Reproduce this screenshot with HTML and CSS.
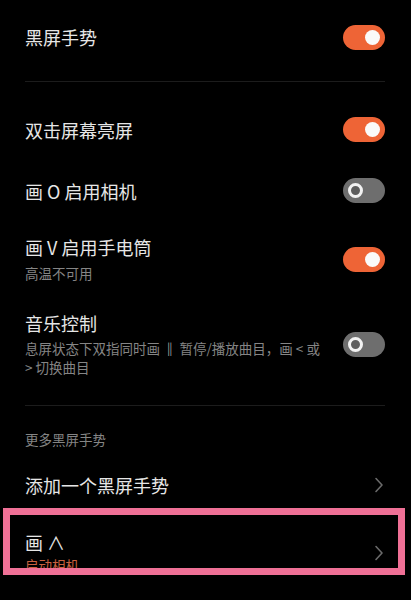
FILE: index.html
```html
<!DOCTYPE html>
<html lang="zh-CN">
<head>
<meta charset="utf-8">
<link rel="stylesheet" href="styles.css">
</head>
<body>
<div class="page">
  <div class="row first">
    <div class="text"><div class="title">黑屏手势</div></div>
    <div class="toggle on"><span class="knob"></span></div>
  </div>
  <div class="divider d1"></div>

  <div class="row single">
    <div class="text"><div class="title">双击屏幕亮屏</div></div>
    <div class="toggle on"><span class="knob"></span></div>
  </div>
  <div class="row single">
    <div class="text"><div class="title">画 O 启用相机</div></div>
    <div class="toggle off"><span class="knob"></span></div>
  </div>
  <div class="row double">
    <div class="text">
      <div class="title">画 V 启用手电筒</div>
      <div class="sub">高温不可用</div>
    </div>
    <div class="toggle on"><span class="knob"></span></div>
  </div>
  <div class="row double">
    <div class="text">
      <div class="title">音乐控制</div>
      <div class="sub multi">息屏状态下双指同时画 <span class="bar">‖</span> 暂停/播放曲目，画 &lt; 或 &gt; 切换曲目</div>
    </div>
    <div class="toggle off"><span class="knob"></span></div>
  </div>
  <div class="divider d2"></div>

  <div class="section">更多黑屏手势</div>

  <div class="row link">
    <div class="text"><div class="title">添加一个黑屏手势</div></div>
    <svg class="chev" width="10" height="16" viewBox="0 0 10 16"><path d="M2 1.5 L8 8 L2 14.5" fill="none" stroke="#6a6a6a" stroke-width="1.6" stroke-linecap="round" stroke-linejoin="round"/></svg>
  </div>
  <div class="row link gesture">
    <div class="text">
      <div class="title">画 ∧</div>
      <div class="sub accent">启动相机</div>
    </div>
    <svg class="chev" width="10" height="16" viewBox="0 0 10 16"><path d="M2 1.5 L8 8 L2 14.5" fill="none" stroke="#6a6a6a" stroke-width="1.6" stroke-linecap="round" stroke-linejoin="round"/></svg>
  </div>
  <div class="highlight"></div>
</div>
</body>
</html>
```

FILE: styles.css
```css
html, body {
  margin: 0;
  padding: 0;
  background: #000;
}
body {
  font-family: "Noto Sans CJK SC", "Noto Sans", sans-serif;
  color: #e6e6e6;
  width: 411px;
  height: 600px;
  overflow: hidden;
}
.page {
  position: relative;
  padding: 0 26px 0 25px;
}
.row {
  display: flex;
  align-items: center;
  justify-content: space-between;
}
.text {
  flex: 1;
  min-width: 0;
}
.title {
  font-size: 18px;
  line-height: 24px;
  color: #e6e6e6;
}
.sub {
  font-size: 13.5px;
  line-height: 20px;
  margin-top: 4px;
  color: #858585;
}
.sub.multi {
  line-height: 19px;
  max-width: 300px;
}
.bar {
  color: #c8c8c8;
  font-weight: bold;
}
.sub.accent {
  color: #c8603f;
  margin-top: 1px;
}
.first {
  height: 74px;
}
.single {
  padding: 18px 0;
}
.double {
  padding: 14px 0;
}
.divider {
  height: 1px;
  background: #1c1c1c;
}
.d1 {
  margin-top: 7px;
  margin-bottom: 17px;
}
.d2 {
  margin-top: 14px;
}
.section {
  font-size: 13.5px;
  line-height: 20px;
  color: #858585;
  padding: 23px 0 6px;
}
.link {
  padding: 18px 0;
}
.gesture {
  padding: 15px 0;
}
.chev {
  flex: none;
  margin-right: 1px;
}
.toggle {
  flex: none;
  width: 42px;
  height: 25px;
  border-radius: 13px;
  position: relative;
  margin-left: 12px;
}
.toggle.on {
  background: #ee6436;
}
.toggle.off {
  background: #6e6e6e;
}
.knob {
  position: absolute;
  top: 5px;
  width: 15px;
  height: 15px;
  border-radius: 50%;
  box-sizing: border-box;
}
.on .knob {
  right: 5px;
  background: #fafafa;
}
.off .knob {
  left: 5px;
  border: 3.5px solid #f2f2f2;
  background: #5e5e5e;
}
.highlight {
  position: absolute;
  left: 3px;
  top: 508px;
  width: 402px;
  height: 67px;
  box-sizing: border-box;
  border: 7px solid #ef7096;
}
```
